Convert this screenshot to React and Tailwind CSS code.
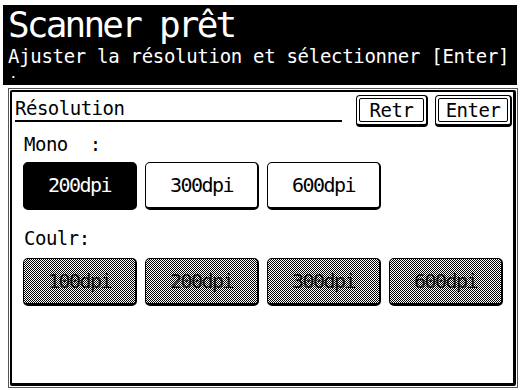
const mono = ["200dpi", "300dpi", "600dpi"];
const color = ["100dpi", "200dpi", "300dpi", "600dpi"];

function FrameButton({ label, width }) {
  return (
    <div
      className={`${width} h-[32px] border border-black border-r-2 border-b-[3px] rounded-[4px] p-[2px] bg-white`}
    >
      <div className="h-full border border-black rounded-[2px] flex items-center justify-center text-[19px] tracking-[-0.5px] leading-none">
        {label}
      </div>
    </div>
  );
}

function DpiButton({ label, selected, disabled }) {
  let look = "bg-white text-black";
  if (selected) look = "bg-black text-white";
  if (disabled)
    look =
      "bg-[repeating-conic-gradient(#000_0%_25%,#fff_0%_50%)] bg-size-[2px_2px] text-[#111]";
  return (
    <div
      className={`w-[114px] h-[48px] border border-black border-r-2 border-b-[3px] rounded-[5px] flex items-center justify-center text-[20px] tracking-[-1.5px] leading-none ${look}`}
    >
      {label}
    </div>
  );
}

export default function App() {
  return (
    <div className="w-[520px] h-[390px] bg-white overflow-hidden font-['DejaVu_Sans_Mono',monospace] text-black">
      {/* HEADER */}
      <div className="mt-[5px] mx-[3px] h-[80px] bg-black text-white px-[5px] pt-[2px]">
        <div className="text-[36px] leading-[36px] tracking-[-2.8px]">Scanner prêt</div>
        <div className="mt-[4px] text-[19px] leading-[19px] tracking-[-0.3px] whitespace-nowrap">
          Ajuster la résolution et sélectionner [Enter]
        </div>
        <div className="mt-[3px] ml-[2px] text-[11px] font-bold leading-[11px]">.</div>
      </div>

      {/* PANEL */}
      <div className="mt-[3px] ml-[8px] w-[510px] h-[300px] border border-[#555] p-[1px]">
        <div className="h-full border-2 border-black border-r-[3px] border-b-[3px] rounded-[2px] pt-[3px] pr-[1px]">
          {/* TITLE ROW */}
          <div className="flex items-start">
            <div className="ml-[3px] w-[327px] h-[27px] flex items-end pb-[2px] border-b-2 border-black text-[19px] leading-[19px] tracking-[-0.5px]">
              Résolution
            </div>
            <div className="ml-auto flex gap-[7px]">
              <FrameButton label="Retr" width="w-[72px]" />
              <FrameButton label="Enter" width="w-[77px]" />
            </div>
          </div>

          {/* MONO */}
          <div className="mt-[8px] ml-[12px] text-[19px] leading-[19px] tracking-[-0.5px] whitespace-pre">
            Mono  :
          </div>
          <div className="mt-[8px] ml-[11px] flex gap-2">
            {mono.map((m, i) => (
              <DpiButton key={m} label={m} selected={i === 0} />
            ))}
          </div>

          {/* COLOUR */}
          <div className="mt-[19px] ml-[12px] text-[19px] leading-[19px] tracking-[-0.5px]">
            Coulr:
          </div>
          <div className="mt-[10px] ml-[11px] flex gap-2">
            {color.map((c) => (
              <DpiButton key={c} label={c} disabled />
            ))}
          </div>
        </div>
      </div>
    </div>
  );
}
